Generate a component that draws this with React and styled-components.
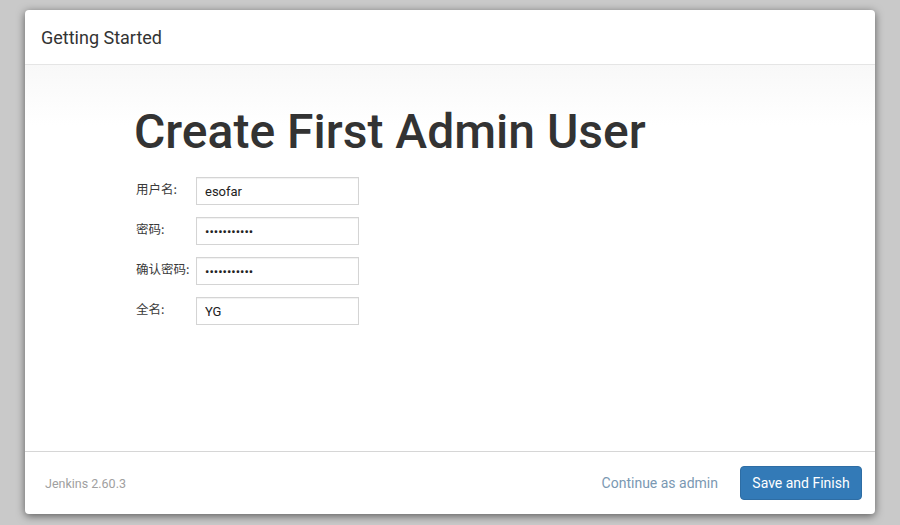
import React from "react";
import styled, { createGlobalStyle } from "styled-components";

const Global = createGlobalStyle`
  html, body { margin: 0; padding: 0; }
  body {
    background: #c9c9c9;
    font-family: Roboto, "Noto Sans CJK SC", "Liberation Sans", sans-serif;
    color: #333;
  }
`;

const Page = styled.div`
  box-sizing: border-box;
  width: 900px;
  height: 525px;
  padding: 10px 25px 11px 25px;
  display: flex;
`;

const Dialog = styled.div`
  flex: 1;
  display: flex;
  flex-direction: column;
  background: #fff;
  border-radius: 4px;
  box-shadow: 0 2px 8px rgba(0, 0, 0, 0.55);
  overflow: hidden;
`;

const Header = styled.div`
  box-sizing: border-box;
  height: 55px;
  display: flex;
  align-items: center;
  padding-left: 16px;
  border-bottom: 1px solid #e5e5e5;
  font-size: 18px;
  font-weight: 400;
  color: #333;
`;

const Body = styled.div`
  flex: 1;
  padding: 38px 0 0 109px;
  background: linear-gradient(to bottom, #f8f8f8 0px, #ffffff 60px);
`;

const Title = styled.h1`
  margin: 0 0 16px 0;
  font-size: 48px;
  font-weight: 500;
  line-height: 58px;
  color: #333;
`;

const Form = styled.div`
  display: flex;
  flex-direction: column;
  gap: 12px;
  margin-left: 2px;
`;

const Row = styled.div`
  display: flex;
  align-items: flex-start;
`;

const Label = styled.label`
  width: 60px;
  padding-top: 2px;
  font-size: 12.5px;
  color: #3a3a3a;
  font-family: "Noto Sans CJK SC", sans-serif;
  white-space: nowrap;
`;

const Input = styled.input`
  box-sizing: border-box;
  width: 163px;
  height: 28px;
  border: 1px solid #d4d4d4;
  box-shadow: inset 0 1px 1px rgba(0, 0, 0, 0.06);
  padding: 0 8px;
  font-family: Roboto, "Liberation Sans", sans-serif;
  font-size: 13px;
  color: #222;
  background: #fff;
  outline: none;
`;

const Footer = styled.div`
  box-sizing: border-box;
  height: 63px;
  border-top: 1px solid #d6d6d6;
  display: flex;
  align-items: center;
  justify-content: space-between;
  padding: 0 13px 0 20px;
`;

const Version = styled.span`
  font-size: 12.5px;
  color: #a0a0a0;
`;

const Actions = styled.div`
  display: flex;
  align-items: center;
  gap: 22px;
`;

const LinkButton = styled.span`
  font-size: 14px;
  color: #7a98b2;
`;

const Primary = styled.button`
  box-sizing: border-box;
  width: 122px;
  height: 34px;
  border: 1px solid #2e6da4;
  border-radius: 4px;
  background: #337ab7;
  color: #fff;
  font-family: Roboto, "Liberation Sans", sans-serif;
  font-size: 14px;
  cursor: pointer;
`;

const fields = [
  { label: "用户名:", type: "text", value: "esofar" },
  { label: "密码:", type: "password", value: "12345678901" },
  { label: "确认密码:", type: "password", value: "12345678901" },
  { label: "全名:", type: "text", value: "YG" },
];

export default function App() {
  return (
    <>
      <Global />
      <Page>
        <Dialog>
          <Header>Getting Started</Header>
          <Body>
            <Title>Create First Admin User</Title>
            <Form>
              {fields.map((f) => (
                <Row key={f.label}>
                  <Label>{f.label}</Label>
                  <Input type={f.type} defaultValue={f.value} readOnly />
                </Row>
              ))}
            </Form>
          </Body>
          <Footer>
            <Version>Jenkins 2.60.3</Version>
            <Actions>
              <LinkButton>Continue as admin</LinkButton>
              <Primary>Save and Finish</Primary>
            </Actions>
          </Footer>
        </Dialog>
      </Page>
    </>
  );
}
